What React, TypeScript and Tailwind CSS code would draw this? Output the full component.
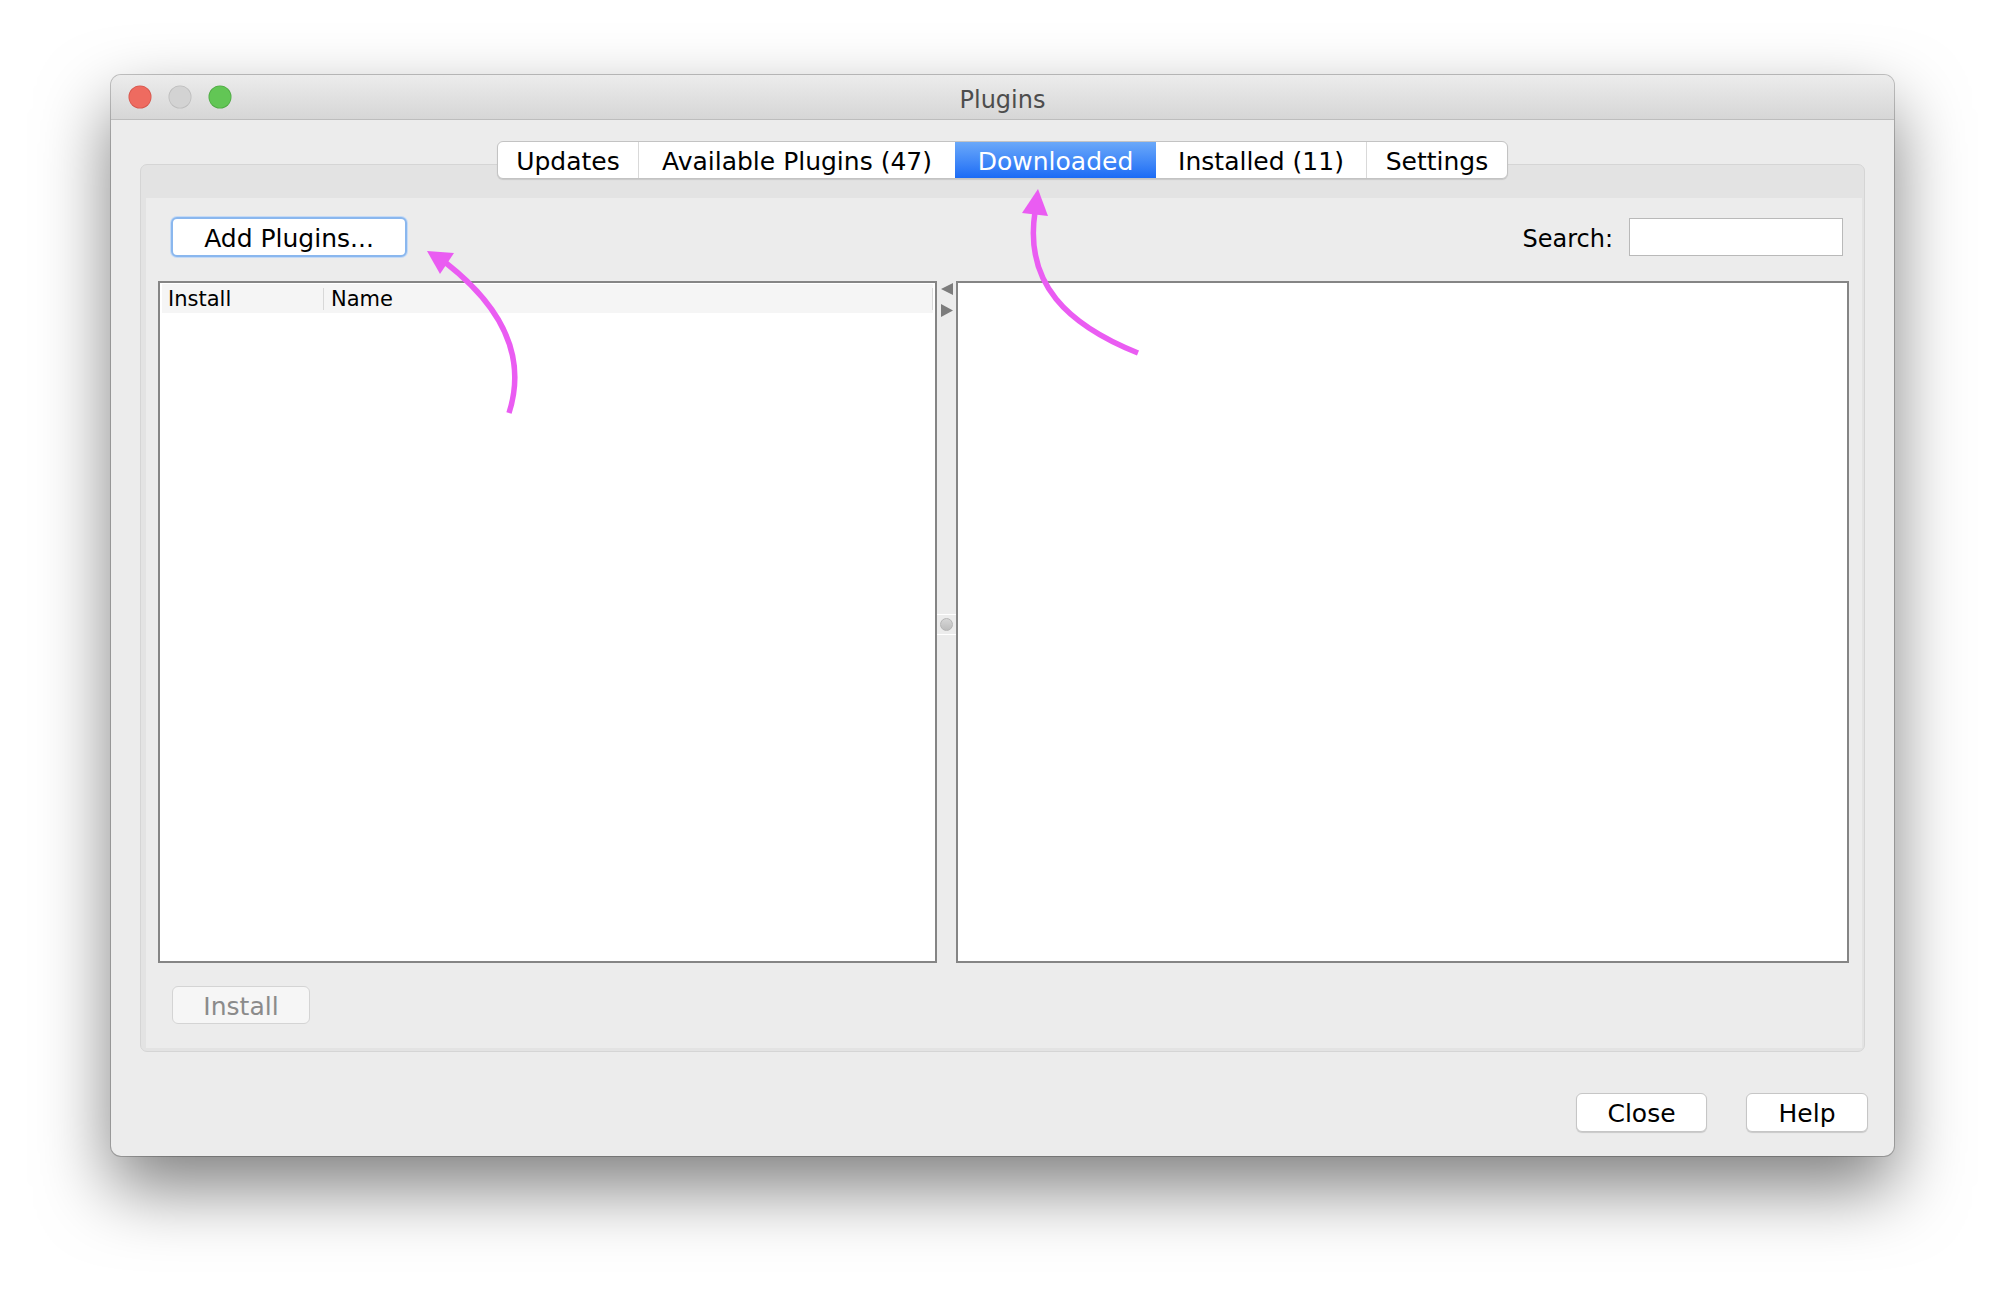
import React from "react";

function Light({ fill, border }: { fill: string; border: string }) {
  return (
    <svg width="24" height="24" viewBox="0 0 24 24">
      <circle cx="12" cy="12" r="11.5" fill={border} />
      <circle cx="12" cy="12" r="10.7" fill={fill} />
    </svg>
  );
}

const tabs = [
  { label: "Updates", w: "w-[140px]", active: false },
  { label: "Available Plugins (47)", w: "w-[317px]", active: false },
  { label: "Downloaded", w: "w-[201px]", active: true },
  { label: "Installed (11)", w: "w-[210px]", active: false },
  { label: "Settings", w: "w-[141px]", active: false },
];

export default function App() {
  return (
    <div className="relative w-[2006px] h-[1304px] bg-white overflow-hidden pt-[75px] pl-[111px] font-['DejaVu_Sans',sans-serif] text-black">
      <div className="w-[1783px] h-[1081px] rounded-[10px] bg-[#ececec] flex flex-col overflow-hidden shadow-[0_32px_70px_0_rgba(0,0,0,0.5),0_0_0_1px_rgba(0,0,0,0.22)]">
        {/* Title bar */}
        <div className="h-[45px] shrink-0 grid grid-cols-[1fr_auto_1fr] items-center bg-gradient-to-b from-[#ececec] to-[#d6d6d6] border-b border-[#bdbdbd]">
          <div className="flex items-center gap-[16px] pl-[17px]">
            <Light fill="#ee6b60" border="#d5564c" />
            <Light fill="#d3d3d3" border="#bdbdbd" />
            <Light fill="#62c655" border="#4fa944" />
          </div>
          <div className="pt-[5px] text-[24px] leading-none text-[#4d4d4d]">Plugins</div>
          <div />
        </div>

        {/* Body */}
        <div className="flex-1 flex flex-col pt-[21px]">
          {/* Tabs */}
          <div className="relative z-10 flex justify-center">
            <div className="flex h-[38px] rounded-[6px] border border-[#c3c3c3] bg-white overflow-hidden shadow-[0_1px_1px_rgba(0,0,0,0.12)]">
              {tabs.map((t, i) => (
                <div
                  key={t.label}
                  className={
                    t.active
                      ? `${t.w} flex items-center justify-center pt-[2px] text-[25px] leading-none text-white bg-gradient-to-b from-[#6aa8f9] to-[#1b6bf5]`
                      : `${t.w} flex items-center justify-center pt-[2px] text-[25px] leading-none text-black ${i > 0 && !tabs[i - 1].active ? "border-l border-[#d9d9d9]" : ""}`
                  }
                >
                  {t.label}
                </div>
              ))}
            </div>
          </div>

          {/* Panel */}
          <div className="mx-[29px] mt-[-15px] h-[888px] rounded-[7px] border border-[#d5d5d5] bg-[#e3e3e3] pl-[5px] pr-[2px] pt-[33px] pb-[3px]">
            <div className="h-full bg-[#ececec] flex flex-col pt-[19px] pb-[24px]">
              {/* Top row */}
              <div className="flex items-center justify-between h-[40px] pl-[25px] pr-[19px]">
                <div className="w-[236px] h-[40px] rounded-[6px] bg-white border-2 border-[#8ab7ee] shadow-[0_0_0_1px_#c4daf6] flex items-center justify-center pt-[2px] text-[25px] leading-none">
                  Add Plugins...
                </div>
                <div className="flex items-center gap-[16px]">
                  <span className="pt-[4px] text-[24px] leading-none">Search:</span>
                  <div className="w-[214px] h-[38px] bg-white border border-[#b9b9b9]" />
                </div>
              </div>

              {/* Lists */}
              <div className="flex h-[682px] mt-[24px] pl-[12px] pr-[13px]">
                <div className="w-[779px] h-full border-2 border-[#858585] bg-white pt-[1px] px-[2px]">
                  <div className="h-[29px] bg-[#f5f5f5] flex items-center">
                    <div className="w-[161px] h-[29px] flex items-center pl-[6px] pt-[2px] text-[21px] leading-none">Install</div>
                    <div className="w-px h-[22px] bg-[#d8d8d8]" />
                    <div className="flex-1 flex items-center pl-[7px] pt-[2px] text-[21px] leading-none">Name</div>
                    <div className="w-px h-[22px] bg-[#d8d8d8]" />
                  </div>
                </div>

                <div className="w-[19px] h-full flex flex-col items-center">
                  <div className="mt-[2px] flex flex-col gap-[9px]">
                    <svg width="12" height="12" viewBox="0 0 12 12">
                      <polygon points="12,0 0,6 12,12" fill="#7c7c7c" />
                    </svg>
                    <svg width="12" height="13" viewBox="0 0 12 13">
                      <polygon points="0,0 12,6.5 0,13" fill="#7c7c7c" />
                    </svg>
                  </div>
                  <div className="mt-[297px] w-full flex flex-col items-center">
                    <div className="w-full h-px bg-white" />
                    <div className="h-[19px] flex items-center">
                      <div className="w-[13px] h-[13px] rounded-full bg-gradient-to-b from-[#d6d6d6] to-[#bdbdbd] border border-[#b5b5b5]" />
                    </div>
                    <div className="w-full h-px bg-white" />
                  </div>
                </div>

                <div className="flex-1 h-full border-2 border-[#858585] bg-white" />
              </div>

              {/* Install */}
              <div className="mt-[23px] pl-[26px]">
                <div className="w-[138px] h-[38px] rounded-[6px] bg-[#f6f6f6] border border-[#d4d4d4] flex items-center justify-center pt-[2px] text-[25px] leading-none text-[#8b8b8b]">
                  Install
                </div>
              </div>
            </div>
          </div>

          {/* Footer */}
          <div className="mt-[41px] flex justify-end gap-[39px] pr-[26px]">
            <div className="w-[131px] h-[39px] rounded-[6px] bg-white border border-[#c6c6c6] shadow-[0_1px_1px_rgba(0,0,0,0.15)] flex items-center justify-center pt-[2px] text-[25px] leading-none">
              Close
            </div>
            <div className="w-[122px] h-[39px] rounded-[6px] bg-white border border-[#c6c6c6] shadow-[0_1px_1px_rgba(0,0,0,0.15)] flex items-center justify-center pt-[2px] text-[25px] leading-none">
              Help
            </div>
          </div>
        </div>
      </div>

      {/* Annotation arrows */}
      <svg className="absolute left-0 top-0 pointer-events-none" width="2006" height="1304" viewBox="0 0 2006 1304">
        <path d="M 509 413 C 526 360, 506 310, 446 263" fill="none" stroke="#ea5cf2" strokeWidth="5.5" />
        <polygon points="427,251 454,253 440,274" fill="#ea5cf2" />
        <path d="M 1138 353 C 1068 325, 1024 284, 1035 212" fill="none" stroke="#ea5cf2" strokeWidth="5.5" />
        <polygon points="1038,189 1022,213 1048,216" fill="#ea5cf2" />
      </svg>
    </div>
  );
}
